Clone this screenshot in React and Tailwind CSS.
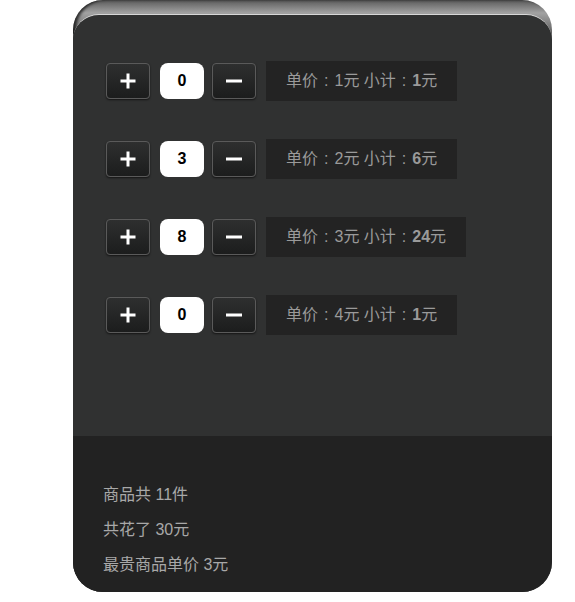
const items = [
  { price: 1, count: 0, sub: 1 },
  { price: 2, count: 3, sub: 6 },
  { price: 3, count: 8, sub: 24 },
  { price: 4, count: 0, sub: 1 },
]

function StepButton({ minus }) {
  return (
    <button className="w-[44px] h-[36px] rounded-[4px] border border-[#5a5a5a] bg-gradient-to-b from-[#2e2f2f] to-[#1c1d1d] shadow-[0_1px_2px_rgba(0,0,0,0.6)] flex items-center justify-center">
      <svg width="16" height="16" viewBox="0 0 16 16" fill="#fff">
        {minus ? (
          <rect x="0" y="6.5" width="16" height="3" />
        ) : (
          <>
            <rect x="0.5" y="6.5" width="15" height="3" />
            <rect x="6.5" y="0.5" width="3" height="15" />
          </>
        )}
      </svg>
    </button>
  )
}

function Colon() {
  return <span className="mx-[6px]">:</span>
}

export default function App() {
  return (
    <div className="w-[575px] h-[602px] bg-white font-['Liberation_Sans','Noto_Sans_CJK_SC',sans-serif]">
      <div className="ml-[73px] w-[479px] h-[592px] rounded-[30px] overflow-hidden bg-[linear-gradient(to_bottom,#5a5a5a_0px,#a2a2a2_13px,#4a4a4a_40px)] pt-[14px] shadow-[inset_3px_0_3px_rgba(0,0,0,0.7)]">
        <div className="h-full rounded-t-[26px] overflow-hidden border-t border-[#d8d8d8] flex flex-col">
          {/* rows */}
          <div className="bg-[#303131] h-[421px] pl-[33px] pt-[46px] flex flex-col gap-[38px]">
            {items.map((it, i) => (
              <div key={i} className="flex items-center h-[40px]">
                <StepButton />
                <div className="ml-[10px] w-[44px] h-[36px] rounded-[8px] bg-white flex items-center justify-center text-black text-[16px] font-bold">
                  {it.count}
                </div>
                <div className="ml-[8px]">
                  <StepButton minus />
                </div>
                <div className="ml-[10px] h-[40px] bg-[#232323] px-[20px] flex items-center whitespace-pre text-[#9a9a9a] text-[16px]">
                  <span>单价</span>
                  <Colon />
                  <span>{it.price}元 小计</span>
                  <Colon />
                  <b className="font-bold">{it.sub}</b>
                  <span>元</span>
                </div>
              </div>
            ))}
          </div>
          {/* summary */}
          <div className="flex-1 bg-[#222222] pl-[30px] pt-[48px] flex flex-col gap-[14px] text-[#a8a8a8] text-[16px] leading-[21px]">
            <p>商品共 11件</p>
            <p>共花了 30元</p>
            <p>最贵商品单价 3元</p>
          </div>
        </div>
      </div>
    </div>
  )
}
